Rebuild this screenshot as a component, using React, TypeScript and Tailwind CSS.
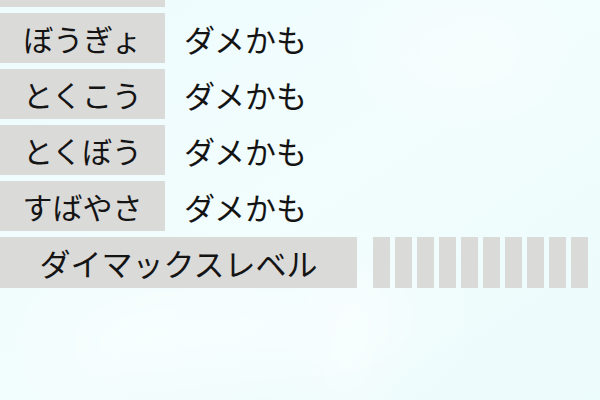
import React from "react";

const stats = [
  { label: "こうげき", value: "ダメかも" },
  { label: "ぼうぎょ", value: "ダメかも" },
  { label: "とくこう", value: "ダメかも" },
  { label: "とくぼう", value: "ダメかも" },
  { label: "すばやさ", value: "ダメかも" },
];

const font = { fontFamily: '"Noto Sans CJK JP", "Noto Sans", sans-serif' };

function StatRow({ label, value }: { label: string; value: string }) {
  return (
    <div className="flex items-center h-[50px]">
      <div className="w-[165px] h-full bg-[#dadad9] flex items-center justify-center text-[30px] text-[#141414] leading-none">
        {label}
      </div>
      <div className="ml-[19px] text-[31px] text-[#141414] leading-none">{value}</div>
    </div>
  );
}

export default function App() {
  return (
    <div
      className="relative w-[600px] h-[400px] overflow-hidden bg-gradient-to-br from-[#eefcfe] via-[#f2fdfd] to-[#ecfbfc]"
      style={font}
    >
      {/* soft light streaks in the backdrop */}
      <div className="pointer-events-none absolute left-[60px] top-[300px] w-[360px] h-[60px] rounded-full bg-white/60 blur-2xl -rotate-6" />
      <div className="pointer-events-none absolute left-[380px] top-[20px] w-[160px] h-[60px] rounded-full bg-white/60 blur-2xl" />
      <div className="pointer-events-none absolute left-[330px] top-[280px] w-[40px] h-[120px] rounded-full bg-white/50 blur-xl rotate-12" />

      <div className="relative flex flex-col gap-[6px] -mt-[43px]">
        {stats.map((s) => (
          <StatRow key={s.label} label={s.label} value={s.value} />
        ))}
        <div className="flex items-center h-[51px]">
          <div className="w-[357px] h-full bg-[#dadad9] flex items-center justify-center text-[31px] text-[#141414] leading-none">
            ダイマックスレベル
          </div>
          <div className="ml-[16px] flex gap-[5px] h-full">
            {Array.from({ length: 10 }).map((_, i) => (
              <div key={i} className="w-[17px] h-full bg-[#dadad9]" />
            ))}
          </div>
        </div>
      </div>
    </div>
  );
}
